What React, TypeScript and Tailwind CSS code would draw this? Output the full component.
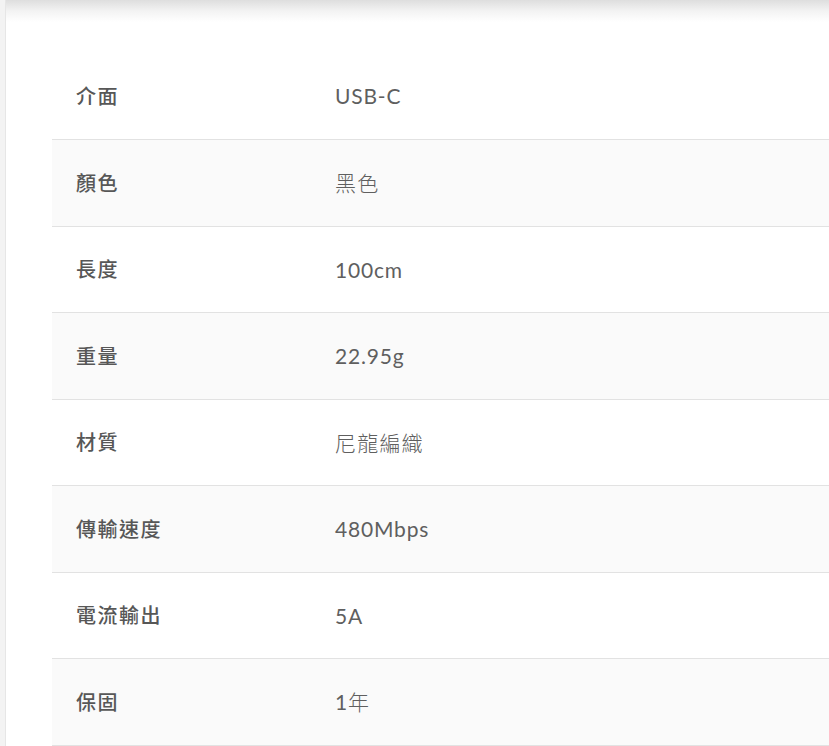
const specs: { label: string; value: string }[] = [
  { label: "介面", value: "USB-C" },
  { label: "顏色", value: "黑色" },
  { label: "長度", value: "100cm" },
  { label: "重量", value: "22.95g" },
  { label: "材質", value: "尼龍編織" },
  { label: "傳輸速度", value: "480Mbps" },
  { label: "電流輸出", value: "5A" },
  { label: "保固", value: "1年" },
];

// CJK runs in the values are set lighter than the latin ones
function Value({ text }: { text: string }) {
  const parts = text.match(/[\u3400-\u9fff]+|[^\u3400-\u9fff]+/g) ?? [];
  return (
    <>
      {parts.map((p, i) =>
        /[\u3400-\u9fff]/.test(p) ? (
          <span key={i} className="font-light tracking-[1.2px] [font-family:'Noto_Sans_CJK_TC',sans-serif]">
            {p}
          </span>
        ) : (
          <span key={i}>{p}</span>
        )
      )}
    </>
  );
}

export default function App() {
  return (
    <div className="h-[746px] w-full overflow-hidden bg-[#f3f3f3] pl-[5px]">
      <div className="relative h-full border-l border-[#e6e6e6] bg-white pl-[46px] pt-[53px]">
        {/* shadow cast by the header above */}
        <div className="pointer-events-none absolute inset-x-0 top-0 h-[22px] bg-gradient-to-b from-[#dedede] via-[#f3f3f3] to-white" />
        <table className="w-[800px] border-collapse">
          <tbody>
            {specs.map((row, i) => (
              <tr
                key={row.label}
                className={`h-[86.5px] border-b border-[#e2e2e2] ${i % 2 === 1 ? "bg-[#fafafa]" : "bg-white"}`}
              >
                <th
                  scope="row"
                  className="w-[283px] pl-6 text-left align-middle text-[20px] font-medium tracking-[1.5px] text-[#575757] [font-family:'Noto_Sans_CJK_TC','Noto_Sans',sans-serif]"
                >
                  {row.label}
                </th>
                <td className="align-middle text-[21px] font-normal tracking-[0.8px] text-[#5f5f5f] [font-family:Lato,'Noto_Sans_CJK_TC',sans-serif]">
                  <Value text={row.value} />
                </td>
              </tr>
            ))}
          </tbody>
        </table>
      </div>
    </div>
  );
}
